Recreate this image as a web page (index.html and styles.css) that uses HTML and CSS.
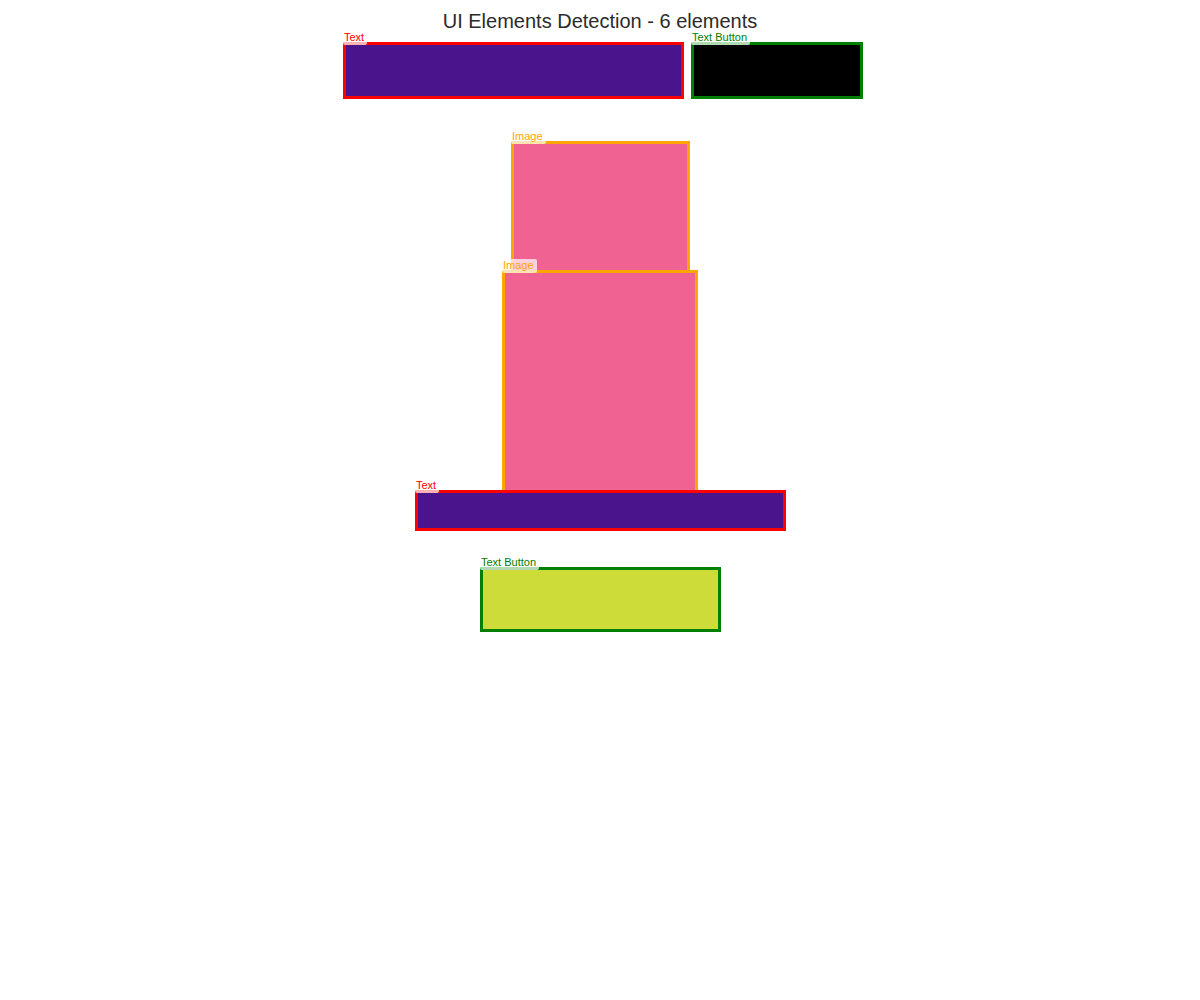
FILE: index.html
```html
<!DOCTYPE html>
<html lang="en">
<head>
    <meta charset="UTF-8">
    <meta name="viewport" content="width=device-width, initial-scale=1.0">
    <title>UI Elements Detection</title>
    <link rel="stylesheet" href="styles.css">
</head>
<body>
    <h1 class="title">UI Elements Detection - 6 elements</h1>

    <!-- Detected elements, placed at their detected coordinates -->
    <div class="canvas">
        <div class="box text fill-purple" style="left: 343px; top: 42px; width: 341px; height: 57px;">
            <span class="label">Text</span>
        </div>
        <div class="box button fill-black" style="left: 691px; top: 42px; width: 172px; height: 57px;">
            <span class="label">Text Button</span>
        </div>
        <div class="box image fill-pink" style="left: 511px; top: 141px; width: 179px; height: 133px;">
            <span class="label">Image</span>
        </div>
        <div class="box image fill-pink" style="left: 502px; top: 270px; width: 196px; height: 224px;">
            <span class="label">Image</span>
        </div>
        <div class="box text fill-purple" style="left: 415px; top: 490px; width: 371px; height: 41px;">
            <span class="label">Text</span>
        </div>
        <div class="box button fill-lime" style="left: 480px; top: 567px; width: 241px; height: 65px;">
            <span class="label">Text Button</span>
        </div>
    </div>
</body>
</html>
```

FILE: styles.css
```css
body {
    margin: 0;
    font-family: "Liberation Sans", Arial, sans-serif;
    background: #fff;
}
.title {
    margin: 0;
    padding-top: 11px;
    font-size: 20px;
    font-weight: normal;
    line-height: 20px;
    text-align: center;
    color: #2b2b2b;
}
.canvas {
    position: absolute;
    top: 0;
    left: 0;
    width: 1200px;
    height: 1000px;
    pointer-events: none;
}
.box {
    position: absolute;
    box-sizing: border-box;
    border: 3px solid;
}
.box.text {
    border-color: #ff0000;
}
.box.button {
    border-color: #008000;
}
.box.image {
    border-color: #ffa500;
}
.fill-purple {
    background-color: #4a148c;
}
.fill-black {
    background-color: #000;
}
.fill-pink {
    background-color: #f06292;
}
.fill-lime {
    background-color: #cddc39;
}
.label {
    position: absolute;
    left: -3px;
    top: -14px;
    padding: 0 3px 0 1px;
    font-size: 11px;
    line-height: 13px;
    padding-bottom: 1px;
    white-space: nowrap;
    background: rgba(255, 255, 255, 0.7);
    border-radius: 2px;
}
.text .label {
    color: #ff0000;
}
.button .label {
    color: #008000;
}
.image .label {
    color: #ffa500;
}
```
